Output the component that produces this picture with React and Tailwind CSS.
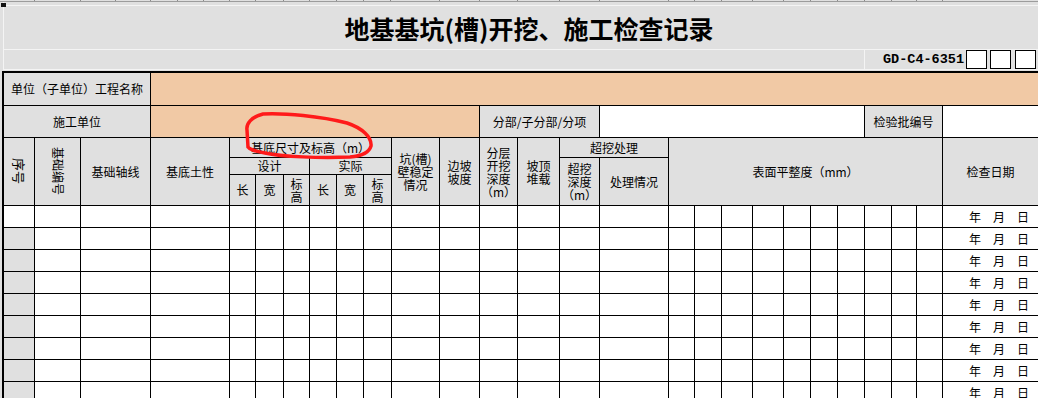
import React from 'react'

const gray = 'bg-[#e0e0e0]'

function Cell({ className = '', children }) {
  return (
    <div className={`flex items-center justify-center text-center text-[12px] leading-[12px] text-black ${className}`}>
      {children}
    </div>
  )
}

function Lines({ items, className = 'leading-[13px]' }) {
  return (
    <div className={`flex flex-col items-center ${className}`}>
      {items.map((t, i) => (
        <span key={i}>{t}</span>
      ))}
    </div>
  )
}

const ticks = [34, 80, 115, 150, 177, 203, 229, 255, 283, 309, 336, 363, 390, 439, 479, 517, 559, 599, 668, 694, 721, 752, 783, 810, 837, 864, 891, 916, 942]

export default function App() {
  const rows = Array.from({ length: 9 })

  return (
    <div className="relative w-[1038px] h-[398px] overflow-hidden bg-[#e0e0e0] font-['Noto_Sans_CJK_SC','Noto_Sans',sans-serif]">
      {/* 表格上方的行号线 */}
      <svg width="1038" height="2" className="block">
        <rect x="0" y="1" width="1038" height="1" fill="#9c9c9c" />
        {ticks.map((x) => (
          <rect key={x} x={x} y="0" width="1" height="1" fill="#8a8a8a" />
        ))}
      </svg>

      <div className="ml-[3px] border-l border-[#f4f4f4]">
        <div className="h-[3px]" />
        <div className="h-[45px] border-t border-b border-[#f4f4f4] flex items-center justify-center pl-[16px] pt-[2px]">
          <h1 className="text-[25px] leading-none font-bold text-black">
            地基基坑(槽)开挖、施工检查记录
          </h1>
        </div>
        <div className="h-[20px] border-b border-[#f4f4f4] flex justify-end">
          <div className="w-[174px] border-l border-[#f4f4f4] flex items-stretch justify-end pr-[2px]">
            <span className="self-center mr-[2px] font-['Liberation_Mono',monospace] font-bold text-[13.5px] leading-none text-black">
              GD-C4-6351
            </span>
            <div className="w-[21px] border border-black bg-white" />
            <div className="w-[21px] ml-[3px] border border-black bg-white" />
            <div className="w-[21px] ml-[4px] border border-black bg-white" />
          </div>
        </div>
      </div>
      <div className="h-px" />

      <div className="ml-[2px] border-l-2 border-t-2 border-black bg-black grid gap-px grid-cols-[30px_45px_69px_78px_25px_27px_25px_26px_26px_27px_47px_39px_37px_41px_39px_68px_25px_26px_30px_30px_26px_26px_26px_26px_24px_25px_95px] grid-rows-[32px_31px_19px_16px_30px_repeat(9,21px)]">
        {/* 第一行 */}
        <Cell className={`${gray} col-start-1 col-span-3 row-start-1`}>单位（子单位）工程名称</Cell>
        <Cell className="bg-[#f1c9a5] col-start-4 col-span-24 row-start-1" />

        {/* 第二行 */}
        <Cell className={`${gray} col-start-1 col-span-3 row-start-2`}>施工单位</Cell>
        <Cell className="bg-[#f1c9a5] col-start-4 col-span-9 row-start-2" />
        <Cell className={`${gray} col-start-13 col-span-3 row-start-2`}>分部/子分部/分项</Cell>
        <Cell className="bg-white col-start-16 col-span-8 row-start-2" />
        <Cell className={`${gray} col-start-24 col-span-3 row-start-2`}>检验批编号</Cell>
        <Cell className="bg-white col-start-27 row-start-2" />

        {/* 表头 */}
        <Cell className={`${gray} col-start-1 row-start-3 row-span-3`}>
          <span className="[writing-mode:vertical-rl] [text-orientation:sideways] text-[13px]">序号</span>
        </Cell>
        <Cell className={`${gray} col-start-2 row-start-3 row-span-3`}>
          <span className="[writing-mode:vertical-rl] [text-orientation:sideways]">基础编号</span>
        </Cell>
        <Cell className={`${gray} col-start-3 row-start-3 row-span-3`}>基础轴线</Cell>
        <Cell className={`${gray} col-start-4 row-start-3 row-span-3`}>基底土性</Cell>
        <Cell className={`${gray} col-start-5 col-span-6 row-start-3`}>基底尺寸及标高（m）</Cell>
        <Cell className={`${gray} col-start-5 col-span-3 row-start-4`}>设计</Cell>
        <Cell className={`${gray} col-start-8 col-span-3 row-start-4`}>实际</Cell>
        <Cell className={`${gray} col-start-5 row-start-5`}>长</Cell>
        <Cell className={`${gray} col-start-6 row-start-5`}>宽</Cell>
        <Cell className={`${gray} col-start-7 row-start-5`}><Lines items={['标', '高']} /></Cell>
        <Cell className={`${gray} col-start-8 row-start-5`}>长</Cell>
        <Cell className={`${gray} col-start-9 row-start-5`}>宽</Cell>
        <Cell className={`${gray} col-start-10 row-start-5`}><Lines items={['标', '高']} /></Cell>
        <Cell className={`${gray} col-start-11 row-start-3 row-span-3`}><Lines items={['坑(槽)', '壁稳定', '情况']} /></Cell>
        <Cell className={`${gray} col-start-12 row-start-3 row-span-3`}><Lines items={['边坡', '坡度']} /></Cell>
        <Cell className={`${gray} col-start-13 row-start-3 row-span-3`}>
          <Lines items={['分层', '开挖', '深度', '（m）']} />
        </Cell>
        <Cell className={`${gray} col-start-14 row-start-3 row-span-3`}><Lines items={['坡顶', '堆载']} /></Cell>
        <Cell className={`${gray} col-start-15 col-span-2 row-start-3`}>超挖处理</Cell>
        <Cell className={`${gray} col-start-15 row-start-4 row-span-2`}>
          <Lines items={['超挖', '深度', '（m）']} />
        </Cell>
        <Cell className={`${gray} col-start-16 row-start-4 row-span-2`}>处理情况</Cell>
        <Cell className={`${gray} col-start-17 col-span-10 row-start-3 row-span-3`}>表面平整度（mm）</Cell>
        <Cell className={`${gray} col-start-27 row-start-3 row-span-3`}>检查日期</Cell>

        {/* 数据行 */}
        {rows.map((_, r) =>
          Array.from({ length: 27 }).map((__, c) => {
            if (c === 0) {
              return <div key={`${r}-${c}`} className={r === 0 ? 'bg-white' : gray} />
            }
            if (c === 26) {
              return (
                <Cell key={`${r}-${c}`} className="bg-white justify-end pr-[9px]">
                  年　月　日
                </Cell>
              )
            }
            return <div key={`${r}-${c}`} className="bg-white" />
          })
        )}
      </div>

      {/* 红色手绘圈 */}
      <svg className="absolute inset-0 pointer-events-none" width="1038" height="398" viewBox="0 0 1038 398">
        <rect x="1" y="3" width="5" height="4" fill="#111" />
        <path
          d="M248 147 L247 130 C246 124 251 117 263 114 C285 113 320 116 347 123 C362 128 372 137 371 146 C369 153 362 156 350 157 C320 158 282 157 265 153 C255 151 250 150 248 147"
          fill="none"
          stroke="#ff1a1a"
          strokeWidth="3.5"
          strokeLinejoin="round"
          strokeLinecap="round"
        />
      </svg>
    </div>
  )
}
